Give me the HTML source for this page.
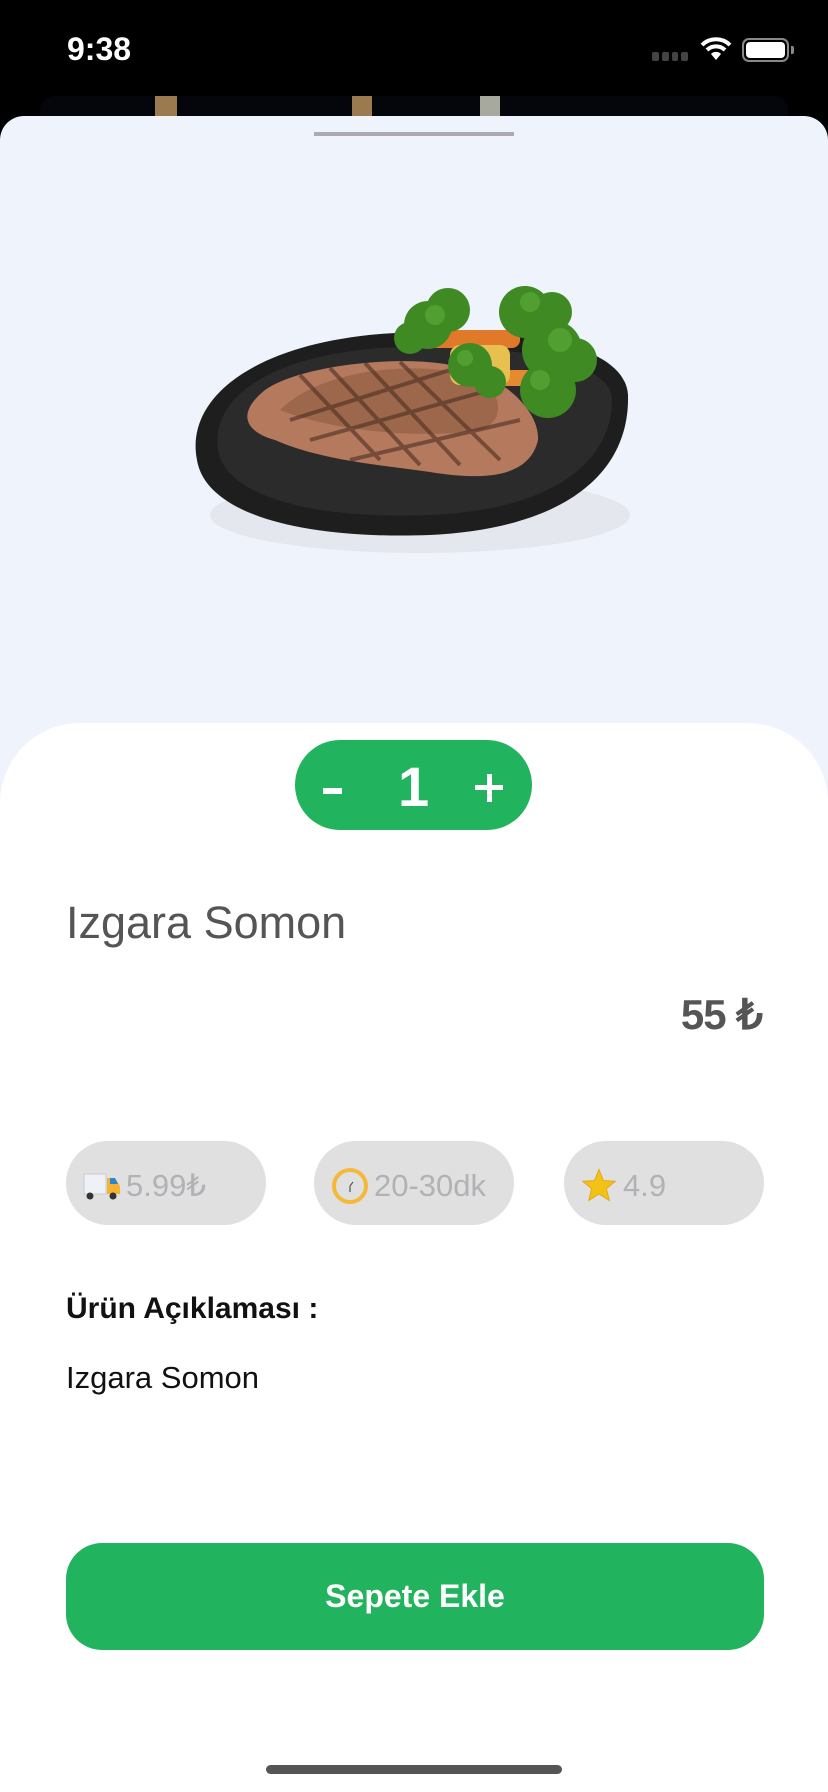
<!DOCTYPE html>
<html><head><meta charset="utf-8"><style>
*{margin:0;padding:0;box-sizing:border-box}
body{width:828px;height:1792px;background:#000;position:relative;overflow:hidden;font-family:"Liberation Sans",sans-serif}
.abs{position:absolute}
</style></head><body>
<div class="abs" style="left:67px;top:31px;color:#fff;font-size:32px;font-weight:bold">9:38</div>
<div class="abs" style="left:652px;top:52px;width:36px;height:10px;display:flex;gap:3px">
<div style="width:7px;height:9px;background:#444;border-radius:2px"></div><div style="width:7px;height:9px;background:#444;border-radius:2px"></div><div style="width:7px;height:9px;background:#444;border-radius:2px"></div><div style="width:7px;height:9px;background:#444;border-radius:2px"></div></div>
<svg class="abs" style="left:700px;top:36px" width="32" height="26" viewBox="0 0 32 26"><path d="M2 9 A20 20 0 0 1 30 9" stroke="#fff" stroke-width="4" fill="none"/><path d="M7 14 A13 13 0 0 1 25 14" stroke="#fff" stroke-width="4" fill="none"/><path d="M16 24 L11 18 A7 7 0 0 1 21 18 Z" fill="#fff"/></svg>
<div class="abs" style="left:742px;top:38px;width:47px;height:24px;border:2px solid #888;border-radius:7px;padding:2px"><div style="width:100%;height:100%;background:#fff;border-radius:4px"></div></div>
<div class="abs" style="left:791px;top:46px;width:3px;height:8px;background:#888;border-radius:0 2px 2px 0"></div>
<div class="abs" style="left:40px;top:96px;width:748px;height:40px;background:#05050c;border-radius:14px 14px 0 0"></div>
<div class="abs" style="left:155px;top:96px;width:22px;height:30px;background:#9a7a4e"></div>
<div class="abs" style="left:352px;top:96px;width:20px;height:30px;background:#9a7a4e"></div>
<div class="abs" style="left:480px;top:96px;width:20px;height:30px;background:#a7a99e"></div>
<div class="abs" style="left:0;top:116px;width:828px;height:700px;background:#eff3fb;border-radius:24px 24px 0 0"></div>
<div class="abs" style="left:314px;top:132px;width:200px;height:4px;background:#aaaab0"></div>
<svg class="abs" style="left:180px;top:260px" width="480" height="320" viewBox="0 0 480 320">
<ellipse cx="240" cy="255" rx="210" ry="38" fill="#dcdfe6" opacity=".6"/>
<path d="M17 200 C5 140 70 85 200 74 C330 64 445 82 448 135 C450 210 390 268 250 275 C110 280 25 250 17 200Z" fill="#1e1e1e"/>
<path d="M38 190 C30 135 95 96 200 88 C320 82 432 98 432 140 C432 200 375 250 250 255 C120 260 45 232 38 190Z" fill="#2b2b2b"/>
<path d="M95 180 C60 170 60 150 85 130 C120 105 220 95 270 105 C320 112 360 150 358 180 C350 215 310 222 250 212 C200 205 140 200 95 180Z" fill="#b57a5e"/>
<path d="M100 150 C140 110 230 100 290 115 C320 125 330 160 300 170 C240 180 150 170 100 150Z" fill="#8d5a40" opacity=".6"/>
<path d="M120 115 L200 200 M150 108 L240 205 M185 103 L280 205 M220 102 L320 200 M110 160 L270 110 M130 180 L310 130 M170 200 L340 160" stroke="#4a2e22" stroke-width="4" opacity=".6"/>
<rect x="220" y="70" width="120" height="18" rx="8" fill="#e07a2a"/>
<rect x="280" y="110" width="110" height="16" rx="8" fill="#e58a30"/>
<rect x="270" y="85" width="60" height="40" rx="10" fill="#e8c050"/>
<g fill="#3f8a22"><circle cx="248" cy="65" r="24"/><circle cx="268" cy="50" r="22"/><circle cx="230" cy="78" r="16"/><circle cx="345" cy="52" r="26"/><circle cx="372" cy="52" r="20"/><circle cx="372" cy="90" r="30"/><circle cx="395" cy="100" r="22"/><circle cx="368" cy="130" r="28"/><circle cx="290" cy="105" r="22"/><circle cx="310" cy="122" r="16"/></g>
<g fill="#5ba838" opacity=".7"><circle cx="255" cy="55" r="10"/><circle cx="350" cy="42" r="10"/><circle cx="380" cy="80" r="12"/><circle cx="360" cy="120" r="10"/><circle cx="285" cy="98" r="8"/></g>
</svg>
<div class="abs" style="left:0;top:723px;width:828px;height:1069px;background:#fff;border-radius:80px 80px 0 0"></div>
<div class="abs" style="left:295px;top:740px;width:237px;height:90px;background:#22b35e;border-radius:45px;color:#fff;font-weight:bold">
<div class="abs" style="left:28px;top:48px;width:19px;height:6px;background:#fff"></div>
<span class="abs" style="left:103px;top:17px;font-size:56px;line-height:60px">1</span>
<div class="abs" style="left:180px;top:45px;width:28px;height:5px;background:#fff"></div>
<div class="abs" style="left:191.5px;top:34px;width:5px;height:28px;background:#fff"></div></div>
<div class="abs" style="left:66px;top:897px;font-size:45px;color:#555">Izgara Somon</div>
<div class="abs" style="right:66px;top:990px;font-size:42px;color:#555;font-weight:bold;letter-spacing:-1px">55 ₺</div>
<div class="abs" style="left:66px;top:1141px;width:200px;height:84px;background:#e0e0e0;border-radius:42px"></div>
<div class="abs" style="left:314px;top:1141px;width:200px;height:84px;background:#e0e0e0;border-radius:42px"></div>
<div class="abs" style="left:564px;top:1141px;width:200px;height:84px;background:#e0e0e0;border-radius:42px"></div>
<svg class="abs" style="left:82px;top:1170px" width="40" height="30" viewBox="0 0 40 30"><path d="M2 4 L24 4 L24 24 L2 24Z" fill="#eef1f5" stroke="#c8ccd2"/><path d="M25 8 L33 8 L38 16 L38 24 L25 24Z" fill="#f4b331"/><path d="M28 8 L33 8 L36 14 L28 14Z" fill="#2a86d1"/><circle cx="8" cy="26" r="3.5" fill="#333"/><circle cx="31" cy="26" r="3.5" fill="#333"/></svg>
<div class="abs" style="left:126px;top:1168px;font-size:31px;color:#b2b2b6">5.99₺</div>
<svg class="abs" style="left:331px;top:1167px" width="38" height="38"><circle cx="19" cy="19" r="16" fill="none" stroke="#f5b93a" stroke-width="4"/><path d="M19 19 L22 15 M19 19 L19 25" stroke="#333" stroke-width="1"/></svg>
<div class="abs" style="left:374px;top:1168px;font-size:31px;color:#b2b2b6">20-30dk</div>
<svg class="abs" style="left:581px;top:1168px" width="36" height="34" viewBox="0 0 24 23"><path d="M12 1 L15 8.5 L23 9 L17 14 L19 22 L12 17.5 L5 22 L7 14 L1 9 L9 8.5Z" fill="#f2c314" stroke="#e8a010" stroke-width=".6"/></svg>
<div class="abs" style="left:623px;top:1168px;font-size:31px;color:#b2b2b6">4.9</div>
<div class="abs" style="left:66px;top:1292px;font-size:30px;color:#111;font-weight:bold">Ürün Açıklaması :</div>
<div class="abs" style="left:66px;top:1360px;font-size:31px;color:#111">Izgara Somon</div>
<div class="abs" style="left:66px;top:1543px;width:698px;height:107px;background:#22b35e;border-radius:36px;color:#fff;font-weight:bold;font-size:32px;text-align:center;line-height:107px">Sepete Ekle</div>
<div class="abs" style="left:266px;top:1765px;width:296px;height:9px;background:#555;border-radius:5px"></div>
</body></html>
